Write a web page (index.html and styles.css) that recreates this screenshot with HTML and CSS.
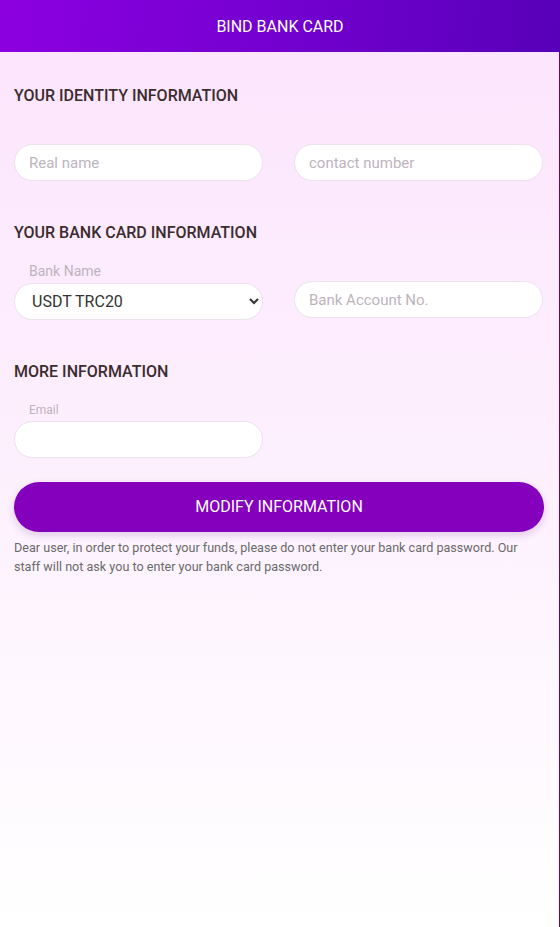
FILE: index.html
```html
<!DOCTYPE html>
<html lang="en">
<head>
<meta charset="utf-8">
<title>Bind Bank Card</title>
<link rel="stylesheet" href="styles.css">
</head>
<body>
<div class="page">
  <header class="header">BIND BANK CARD</header>
  <main class="main">
    <h2 class="section-title first">YOUR IDENTITY INFORMATION</h2>
    <div class="row row-identity">
      <input class="field" type="text" placeholder="Real name">
      <input class="field" type="text" placeholder="contact number">
    </div>

    <h2 class="section-title second">YOUR BANK CARD INFORMATION</h2>
    <div class="row row-bank">
      <div class="group">
        <label class="label">Bank Name</label>
        <select class="field select">
          <option>USDT TRC20</option>
        </select>
      </div>
      <input class="field account" type="text" placeholder="Bank Account No.">
    </div>

    <h2 class="section-title third">MORE INFORMATION</h2>
    <div class="row row-more">
      <div class="group">
        <label class="label small">Email</label>
        <input class="field" type="text">
      </div>
    </div>

    <button class="submit" type="button">MODIFY INFORMATION</button>
    <p class="note">Dear user, in order to protect your funds, please do not enter your bank card password. Our staff will not ask you to enter your bank card password.</p>
  </main>
</div>
</body>
</html>
```

FILE: styles.css
```css
* { box-sizing: border-box; }
html, body {
  margin: 0;
  padding: 0;
  height: 100%;
}
body {
  font-family: Roboto, "Liberation Sans", sans-serif;
  background: #5a00b8;
}
.page {
  width: 559px;
  min-height: 927px;
  background: linear-gradient(180deg, #fce4fd 0%, #fdf0fe 50%, #ffffff 100%);
}
.header {
  width: 560px;
  height: 52px;
  display: flex;
  align-items: center;
  justify-content: center;
  color: #fff;
  font-size: 16px;
  background: linear-gradient(100deg, #8c00e0 0%, #7400d0 50%, #5700b8 100%);
}
.main {
  padding: 0 15px 0 14px;
}
.section-title {
  margin: 41px 0 0;
  font-size: 16px;
  line-height: 20px;
  font-weight: 500;
  color: #3b2c2e;
}
.section-title.first { margin-top: 34px; }
.section-title.second { margin-top: 42px; }
.section-title.third { margin-top: 42px; }
.row {
  display: grid;
  grid-template-columns: 249px 249px;
  column-gap: 31px;
  align-items: end;
}
.row-identity { margin-top: 38px; }
.row-bank { margin-top: 20px; }
.row-more { margin-top: 21px; }
.group {
  display: flex;
  flex-direction: column;
}
.label {
  padding-left: 15px;
  font-size: 14px;
  line-height: 16px;
  color: #bdb3bd;
  margin-bottom: 4px;
}
.label.small {
  font-size: 12px;
  line-height: 14px;
  margin-bottom: 4px;
}
.field {
  width: 249px;
  height: 37px;
  border: 1px solid #ebe2eb;
  border-radius: 20px;
  background: #fff;
  padding: 0 14px;
  font-family: Roboto, "Liberation Sans", sans-serif;
  font-size: 15px;
  color: #333;
  outline: none;
}
.field::placeholder { color: #bcb4bc; }
.select {
  font-size: 16px;
  color: #333;
  padding-left: 13px;
  padding-right: 6px;
}
.account { margin-bottom: 2px; }
.submit {
  display: block;
  width: 530px;
  height: 50px;
  margin-top: 24px;
  border: none;
  border-radius: 25px;
  background: #8400bc;
  color: #fff;
  font-family: Roboto, "Liberation Sans", sans-serif;
  font-size: 16px;
  line-height: 18px;
  padding: 0;
  box-shadow: 0 3px 8px rgba(90, 0, 130, 0.18);
}
.note {
  margin: 6px 0 0;
  font-size: 12.6px;
  line-height: 19px;
  color: #6a6a6a;
}
```
